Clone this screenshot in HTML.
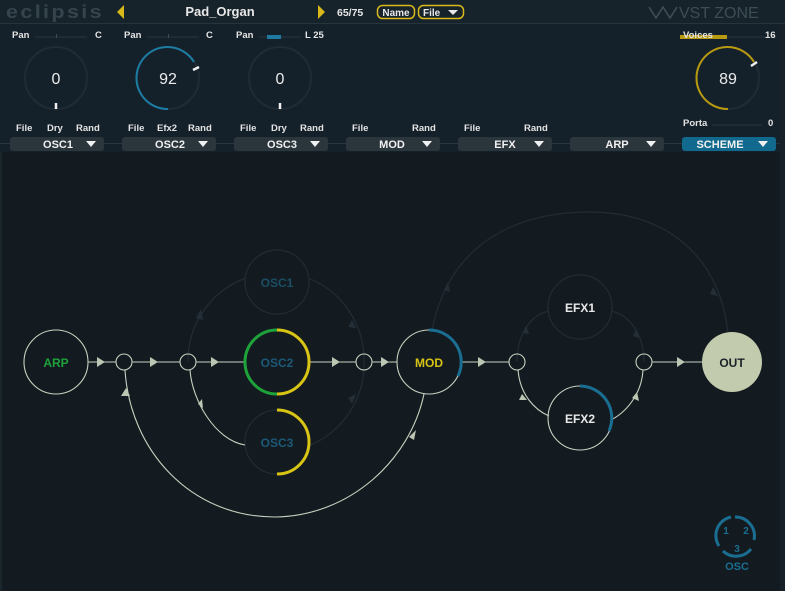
<!DOCTYPE html>
<html><head><meta charset="utf-8"><style>
html,body{margin:0;padding:0;background:#141b20;}
body{width:785px;height:591px;overflow:hidden;position:relative;font-family:"Liberation Sans",sans-serif;}
svg{position:absolute;left:0;top:0;}
</style></head><body>
<svg width="785" height="591" viewBox="0 0 785 591" font-family="Liberation Sans, sans-serif">
<rect x="0" y="0" width="785" height="591" fill="#141b20"/>
<rect x="0" y="0" width="785" height="24" fill="#17232b"/>
<line x1="0" y1="23.5" x2="785" y2="23.5" stroke="#26343d"/>
<rect x="0" y="24" width="785" height="128" fill="#15212a"/>
<rect x="0" y="152" width="2" height="439" fill="#1b252c"/>
<rect x="780" y="24" width="5" height="567" fill="#182127"/>
<!-- logo -->
<text x="6" y="18" font-size="18" font-weight="bold" fill="#35444d" letter-spacing="2" textLength="98" lengthAdjust="spacingAndGlyphs">eclipsis</text>
<polygon points="124,5 124,19 117,12" fill="#d8b81a"/>
<text x="220" y="16" font-size="13" font-weight="bold" fill="#e8e8e8" text-anchor="middle">Pad_Organ</text>
<polygon points="318,5 318,19 325,12" fill="#d8b81a"/>
<text x="337" y="16" font-size="10.5" font-weight="bold" fill="#e8e8e8">65/75</text>
<rect x="377.5" y="5.5" width="37" height="13" rx="5" fill="none" stroke="#d8b81a" stroke-width="1.5"/>
<text x="396" y="16" font-size="10" font-weight="bold" fill="#e8e8e8" text-anchor="middle">Name</text>
<rect x="418.5" y="5.5" width="45" height="13" rx="5" fill="none" stroke="#d8b81a" stroke-width="1.5"/>
<text x="423" y="16" font-size="10" font-weight="bold" fill="#e8e8e8">File</text>
<polygon points="448,10 458,10 453,15" fill="#e8e8e8"/>
<path d="M649,7 L656,18 L663,7 L670,18 L677,7" fill="none" stroke="#3d4c55" stroke-width="1.6"/>
<text x="679" y="18" font-size="16" fill="#3d4c55">VST ZONE</text>

<!-- pan rows -->
<rect x="35" y="36" width="52" height="2" fill="#1e2c35"/><rect x="56" y="34" width="1" height="4" fill="#3a4a53"/>
<rect x="147" y="36" width="52" height="2" fill="#1e2c35"/><rect x="168" y="34" width="1" height="4" fill="#3a4a53"/>
<rect x="259" y="36" width="42" height="2" fill="#1e2c35"/><rect x="267" y="35" width="14" height="4" fill="#1e7aa0"/>
<rect x="680" y="36" width="96" height="2" fill="#1e2c35"/><rect x="680" y="35" width="47" height="4" fill="#b89a10"/>
<rect x="712" y="124" width="50" height="2" fill="#1e2c35"/>
<g font-size="9.5" font-weight="bold" fill="#e4e4e4">
<text x="12" y="38">Pan</text><text x="95" y="38">C</text>
<text x="124" y="38">Pan</text><text x="206" y="38">C</text>
<text x="236" y="38">Pan</text><text x="305" y="38">L 25</text>
<text x="683" y="38">Voices</text><text x="765" y="38">16</text>
<text x="683" y="126">Porta</text><text x="768" y="126">0</text>
</g>

<!-- knobs -->
<g fill="none" stroke-width="2">
<circle cx="56" cy="78" r="31" stroke="#1f2c34"/>
<circle cx="168" cy="78" r="31" stroke="#1f2c34"/>
<circle cx="280" cy="78" r="31" stroke="#1f2c34"/>
<circle cx="728" cy="78" r="31" stroke="#1f2c34"/>
<path d="M168,109 A31,31 0 1 1 194,62" stroke="#1c7ca3"/>
<path d="M728,109 A31,31 0 1 1 754,62" stroke="#b89a10"/>
</g>
<g stroke="#f0f0f0" stroke-width="2.5">
<line x1="56" y1="103" x2="56" y2="109"/>
<line x1="280" y1="103" x2="280" y2="109"/>
<line x1="193" y1="70" x2="199" y2="67"/>
<line x1="751" y1="66" x2="757" y2="62"/>
</g>
<g font-size="16" fill="#ececec" text-anchor="middle">
<text x="56" y="84">0</text><text x="168" y="84">92</text><text x="280" y="84">0</text><text x="728" y="84">89</text>
</g>

<!-- labels row -->
<g font-size="9.5" font-weight="bold" fill="#e4e4e4">
<text x="16" y="131">File</text><text x="47" y="131">Dry</text><text x="76" y="131">Rand</text>
<text x="128" y="131">File</text><text x="157" y="131">Efx2</text><text x="188" y="131">Rand</text>
<text x="240" y="131">File</text><text x="271" y="131">Dry</text><text x="300" y="131">Rand</text>
<text x="352" y="131">File</text><text x="412" y="131">Rand</text>
<text x="464" y="131">File</text><text x="524" y="131">Rand</text>
</g>
<line x1="0" y1="143.5" x2="780" y2="143.5" stroke="#2a363e"/>
<g fill="#2b353c">
<rect x="10" y="137" width="94" height="14" rx="3"/>
<rect x="122" y="137" width="94" height="14" rx="3"/>
<rect x="234" y="137" width="94" height="14" rx="3"/>
<rect x="346" y="137" width="94" height="14" rx="3"/>
<rect x="458" y="137" width="94" height="14" rx="3"/>
<rect x="570" y="137" width="94" height="14" rx="3"/>
</g>
<rect x="682" y="137" width="94" height="14" rx="3" fill="#116a8e"/>
<g font-size="11" font-weight="bold" fill="#f0f0f0" text-anchor="middle">
<text x="58" y="148">OSC1</text><text x="170" y="148">OSC2</text><text x="282" y="148">OSC3</text>
<text x="392" y="148">MOD</text><text x="505" y="148">EFX</text><text x="617" y="148">ARP</text><text x="720" y="148">SCHEME</text>
</g>
<g fill="#f0f0f0">
<polygon points="86,141 96,141 91,147"/><polygon points="198,141 208,141 203,147"/><polygon points="310,141 320,141 315,147"/>
<polygon points="422,141 432,141 427,147"/><polygon points="534,141 544,141 539,147"/><polygon points="646,141 656,141 651,147"/>
<polygon points="758,141 768,141 763,147"/>
</g>

<!-- graph faint lines -->
<g fill="none" stroke="#222c35" stroke-width="1.2">
<path d="M188,362 A88,88 0 0 1 246,278"/>
<path d="M308,278 A88,88 0 0 1 364,362"/>
<path d="M308,446 A88,88 0 0 0 364,362"/>
<path d="M432,330 C450,240 520,212 590,212 C660,212 718,250 728,332"/>
<path d="M517,362 C517,335 530,315 549,311"/>
<path d="M611,311 C630,315 644,335 644,362"/>
<circle cx="277" cy="282" r="32"/>
<circle cx="277" cy="442" r="32"/>
<circle cx="580" cy="307" r="32"/>
</g>
<g fill="#232e37">
<polygon points="196,318 201,309 203,320"/><polygon points="352,320 356,328 348,327"/><polygon points="352,404 356,394 348,398"/>
<polygon points="444,290 448,282 450,292"/><polygon points="713,287 718,296 710,294"/>
<polygon points="523,333 526,325 529,334"/><polygon points="636,329 640,338 633,336"/>
</g>
<!-- graph bright lines -->
<g fill="none" stroke="#c8d0c0" stroke-width="1.1">
<line x1="88" y1="362" x2="116" y2="362"/>
<line x1="132" y1="362" x2="180" y2="362"/>
<line x1="196" y1="362" x2="245" y2="362"/>
<line x1="309" y1="362" x2="356" y2="362"/>
<line x1="372" y1="362" x2="397" y2="362"/>
<line x1="461" y1="362" x2="509" y2="362"/>
<line x1="652" y1="362" x2="702" y2="362"/>
<path d="M190,370 C192,400 215,440 245,445"/>
<path d="M424,394 C410,460 350,516 275,517 C190,517 130,450 125,370"/>
<path d="M518,370 C520,395 535,410 549,416"/>
<path d="M611,420 C630,410 642,390 643,370"/>
<circle cx="56" cy="362" r="32"/>
<circle cx="124" cy="362" r="8"/>
<circle cx="188" cy="362" r="8"/>
<circle cx="364" cy="362" r="8"/>
<circle cx="517" cy="362" r="8"/>
<circle cx="644" cy="362" r="8"/>
<circle cx="429" cy="362" r="32"/>
<circle cx="580" cy="418" r="32"/>
</g>
<g fill="#bcc6b2">
<polygon points="97,357 97,367 105,362"/><polygon points="150,357 150,367 158,362"/><polygon points="211,357 211,367 219,362"/>
<polygon points="332,357 332,367 340,362"/><polygon points="381,357 381,367 389,362"/>
<polygon points="478,357 478,367 486,362"/><polygon points="677,357 677,367 685,362"/>
<polygon points="198,404 202,399 203,408"/><polygon points="126,388 121,396 130,396"/>
<polygon points="409,437 416,430 414,440"/><polygon points="522,394 527,400 519,400"/><polygon points="637,392 639,401 632,398"/>
</g>
<circle cx="732" cy="362" r="30" fill="#c2cbae"/>
<!-- colored arcs -->
<g fill="none" stroke-width="3">
<path d="M277,330 A32,32 0 0 0 277,394" stroke="#1ea23a"/>
<path d="M277,330 A32,32 0 0 1 277,394" stroke="#d8c414"/>
<path d="M277,410 A32,32 0 0 1 277,474" stroke="#d8c414"/>
<path d="M429,330 A32,32 0 0 1 458,376" stroke="#1a6e92"/>
<path d="M580,386 A32,32 0 0 1 609,431" stroke="#1a6e92"/>
</g>
<g font-size="12" font-weight="bold" text-anchor="middle">
<text x="56" y="367" fill="#1ea23a">ARP</text>
<text x="277" y="287" fill="#1a4e66">OSC1</text>
<text x="277" y="367" fill="#1a5a78">OSC2</text>
<text x="277" y="447" fill="#1a5a78">OSC3</text>
<text x="429" y="367" fill="#d8c414">MOD</text>
<text x="580" y="312" fill="#e8e8e8">EFX1</text>
<text x="580" y="423" fill="#e8e8e8">EFX2</text>
<text x="732" y="367" fill="#1a2228">OUT</text>
</g>
<!-- OSC mini -->
<g fill="none" stroke="#1a6e92" stroke-width="3">
<path d="M735,517 A19,19 0 0 1 754,540"/>
<path d="M731,517 A19,19 0 0 0 719,546"/>
<path d="M723,551 A19,19 0 0 0 751,549"/>
</g>
<g font-size="10" fill="#1a6e92" text-anchor="middle" font-weight="bold">
<text x="726" y="534">1</text><text x="746" y="534">2</text><text x="737" y="552">3</text>
<text x="737" y="570" font-size="11">OSC</text>
</g>
</svg>
</body></html>
